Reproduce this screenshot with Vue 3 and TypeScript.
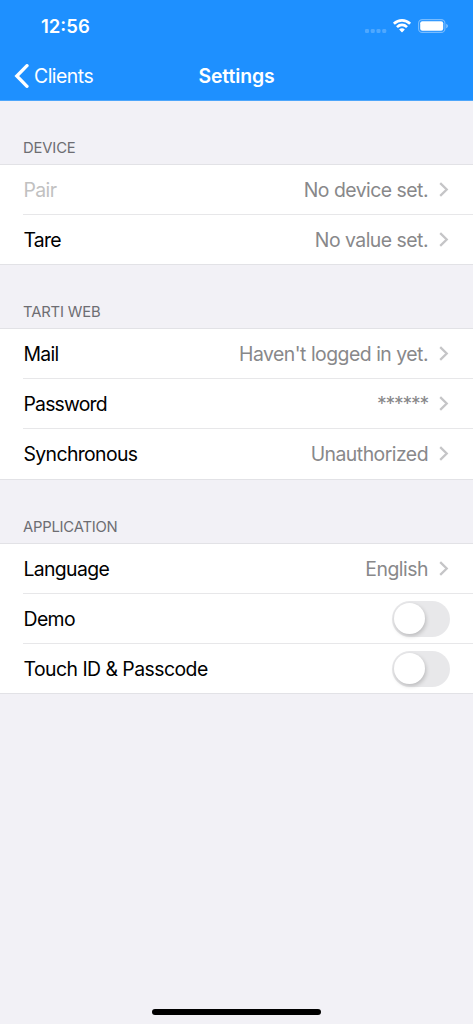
<script setup lang="ts">
import { ref } from 'vue'

interface Row {
  label: string
  value?: string
  disabled?: boolean
  toggle?: boolean
  on?: boolean
  spacing: number
  valueSpacing?: number
}

interface Group {
  title: string
  spacing: number
  rows: Row[]
}

const groups = ref<Group[]>([
  {
    title: 'Device',
    spacing: -0.15,
    rows: [
      { label: 'Pair', value: 'No device set.', disabled: true, spacing: -0.6, valueSpacing: -0.51 },
      { label: 'Tare', value: 'No value set.', spacing: -0.75, valueSpacing: -0.51 },
    ],
  },
  {
    title: 'Tarti Web',
    spacing: -0.15,
    rows: [
      { label: 'Mail', value: "Haven't logged in yet.", spacing: -0.7, valueSpacing: -0.5 },
      { label: 'Password', value: '******', spacing: -0.8, valueSpacing: -1.2 },
      { label: 'Synchronous', value: 'Unauthorized', spacing: -0.62, valueSpacing: -0.52 },
    ],
  },
  {
    title: 'Application',
    spacing: -0.22,
    rows: [
      { label: 'Language', value: 'English', spacing: -0.65, valueSpacing: -0.48 },
      { label: 'Demo', toggle: true, on: false, spacing: -0.6 },
      { label: 'Touch ID & Passcode', toggle: true, on: false, spacing: -0.53 },
    ],
  },
])
</script>

<template>
  <div class="screen">
    <header class="header">
      <div class="status-bar">
        <span class="time">12:56</span>
        <div class="status-icons">
          <svg class="signal" width="22" height="4" viewBox="0 0 22 4">
            <rect v-for="i in 4" :key="i" :x="(i - 1) * 5.75" y="0" width="4" height="4" rx="1.3" fill="#fff" fill-opacity="0.22" />
          </svg>
          <svg class="wifi" width="18" height="14" viewBox="0 0 18 14">
            <path d="M9 0C5.6 0 2.500 1.300.2 3.500a.4.4 0 0 0 0 .6l1.300 1.350a.4.4 0 0 0 .6 0A10 10 0 0 1 9 2.700a10 10 0 0 1 6.900 2.750.4.4 0 0 0 .6 0l1.300-1.350a.4.4 0 0 0 0-.6A12.700 12.700 0 0 0 9 0z" fill="#fff" />
            <path d="M9 4.600a8.200 8.200 0 0 0-5.700 2.300.4.4 0 0 0 0 .6l1.350 1.350a.4.4 0 0 0 .58 0A5.500 5.500 0 0 1 9 7.300a5.500 5.500 0 0 1 3.770 1.550.4.4 0 0 0 .58 0L14.700 7.500a.4.4 0 0 0 0-.6A8.200 8.200 0 0 0 9 4.600z" fill="#fff" />
            <path d="M9 9.200c-1 0-1.900.4-2.600 1a.4.4 0 0 0 0 .6l2.300 2.400a.4.4 0 0 0 .6 0l2.300-2.400a.4.4 0 0 0 0-.6c-.7-.6-1.600-1-2.600-1z" fill="#fff" />
          </svg>
          <svg class="battery" width="31" height="14" viewBox="0 0 31 14">
            <rect x="0.600" y="0.600" width="26.300" height="12.800" rx="3.700" fill="none" stroke="#fff" stroke-opacity="0.4" stroke-width="1.100" />
            <rect x="2.200" y="2.200" width="23" height="9.600" rx="2.100" fill="#fff" />
            <path d="M28.300 4.700v4.600c.9-.4 1.500-1.300 1.500-2.300s-.6-1.900-1.500-2.300z" fill="#fff" fill-opacity="0.5" />
          </svg>
        </div>
      </div>
      <nav class="nav-bar">
        <button class="back" type="button">
          <svg width="15" height="24" viewBox="0 0 15 24">
            <path d="M13 1.700L2.800 12l10.200 10.300" fill="none" stroke="#fff" stroke-width="3.300" stroke-linecap="round" stroke-linejoin="miter" />
          </svg>
          <span>Clients</span>
        </button>
        <h1 class="title">Settings</h1>
      </nav>
    </header>

    <main>
      <section v-for="group in groups" :key="group.title" class="group">
        <h2 class="group-title" :style="{ letterSpacing: `${group.spacing}px` }">{{ group.title }}</h2>
        <ul class="list">
          <li v-for="row in group.rows" :key="row.label" class="row" :class="{ disabled: row.disabled }">
            <span class="label" :style="{ letterSpacing: `${row.spacing}px` }">{{ row.label }}</span>
            <button
              v-if="row.toggle"
              type="button"
              class="switch"
              :class="{ on: row.on }"
              role="switch"
              :aria-checked="row.on"
              @click="row.on = !row.on"
            >
              <span class="knob"></span>
            </button>
            <template v-else>
              <span class="value" :style="{ letterSpacing: `${row.valueSpacing}px` }">{{ row.value }}</span>
              <svg class="chevron" width="10" height="16" viewBox="0 0 10 16">
                <path d="M1.200 1.200L7.700 7.500l-6.500 6.300" fill="none" stroke="#c5c5c7" stroke-width="2.300" />
              </svg>
            </template>
          </li>
        </ul>
      </section>
    </main>

    <div class="home-indicator"></div>
  </div>
</template>

<style>
body {
  margin: 0;
  background: #f2f1f6;
}
</style>

<style scoped>
.screen {
  display: flex;
  flex-direction: column;
  box-sizing: border-box;
  height: 1024px;
  padding-bottom: 9px;
  overflow: hidden;
  background: #f2f1f6;
  font-family: Inter, 'Liberation Sans', sans-serif;
  font-size: 19.4px;
  color: #000;
}
.header {
  box-sizing: border-box;
  height: 101px;
  background: #1e90ff;
  border-bottom: 1px solid #4da6fb;
  color: #fff;
}
.status-bar {
  display: flex;
  justify-content: space-between;
  align-items: center;
  height: 52px;
  padding: 0 24px 0 41px;
}
.time {
  font-size: 18.5px;
  font-weight: 600;
  letter-spacing: 0;
}
.status-icons {
  display: flex;
  align-items: center;
}
.signal {
  margin: 9px 6px 0 0;
}
.wifi {
  margin-right: 7px;
}
.nav-bar {
  display: grid;
  grid-template-columns: 1fr auto 1fr;
  align-items: center;
  height: 48px;
}
.back {
  display: flex;
  align-items: center;
  gap: 5px;
  padding: 0 0 0 14px;
  border: 0;
  background: none;
  font: inherit;
  color: inherit;
  letter-spacing: -0.5px;
}
.title {
  margin: 0;
  font-size: 19.4px;
  font-weight: 600;
  letter-spacing: -0.08px;
}
main {
  flex: 1;
}
.group-title {
  box-sizing: border-box;
  height: 63px;
  margin: 0;
  padding: 37px 23px 0;
  font-size: 14.8px;
  line-height: 20px;
  font-weight: 400;
  text-transform: uppercase;
  color: #6d6d72;
}
.list {
  margin: 0;
  padding: 0 0 0 23px;
  list-style: none;
  background: #fff;
  border-top: 1px solid #e2e2e6;
  border-bottom: 1px solid #e2e2e6;
}
.row {
  display: flex;
  align-items: center;
  box-sizing: border-box;
  height: 50px;
  padding-right: 23px;
  border-bottom: 1px solid #e7e7e9;
}
.row:last-child {
  height: 49px;
  border-bottom: 0;
}
.row:nth-child(3):not(:has(.switch)) {
  height: 50px;
}
.label {
  flex: 1;
  padding-left: 0.5px;
}
.disabled .label {
  color: #c1c1c1;
}
.value {
  margin-right: 11px;
  color: #88888a;
}
.chevron {
  margin-right: 1px;
}
.switch {
  width: 58px;
  height: 36px;
  padding: 2px;
  border: 0;
  border-radius: 18px;
  background: #e8e8ea;
}
.knob {
  display: block;
  width: 31px;
  height: 31px;
  border-radius: 50%;
  background: #fff;
  box-shadow: 1px 2px 4px rgba(0, 0, 0, 0.2);
}
.switch.on {
  background: #34c759;
}
.switch.on .knob {
  margin-left: auto;
}
.home-indicator {
  align-self: center;
  width: 169px;
  height: 6px;
  border-radius: 3px;
  background: #000;
}
</style>
